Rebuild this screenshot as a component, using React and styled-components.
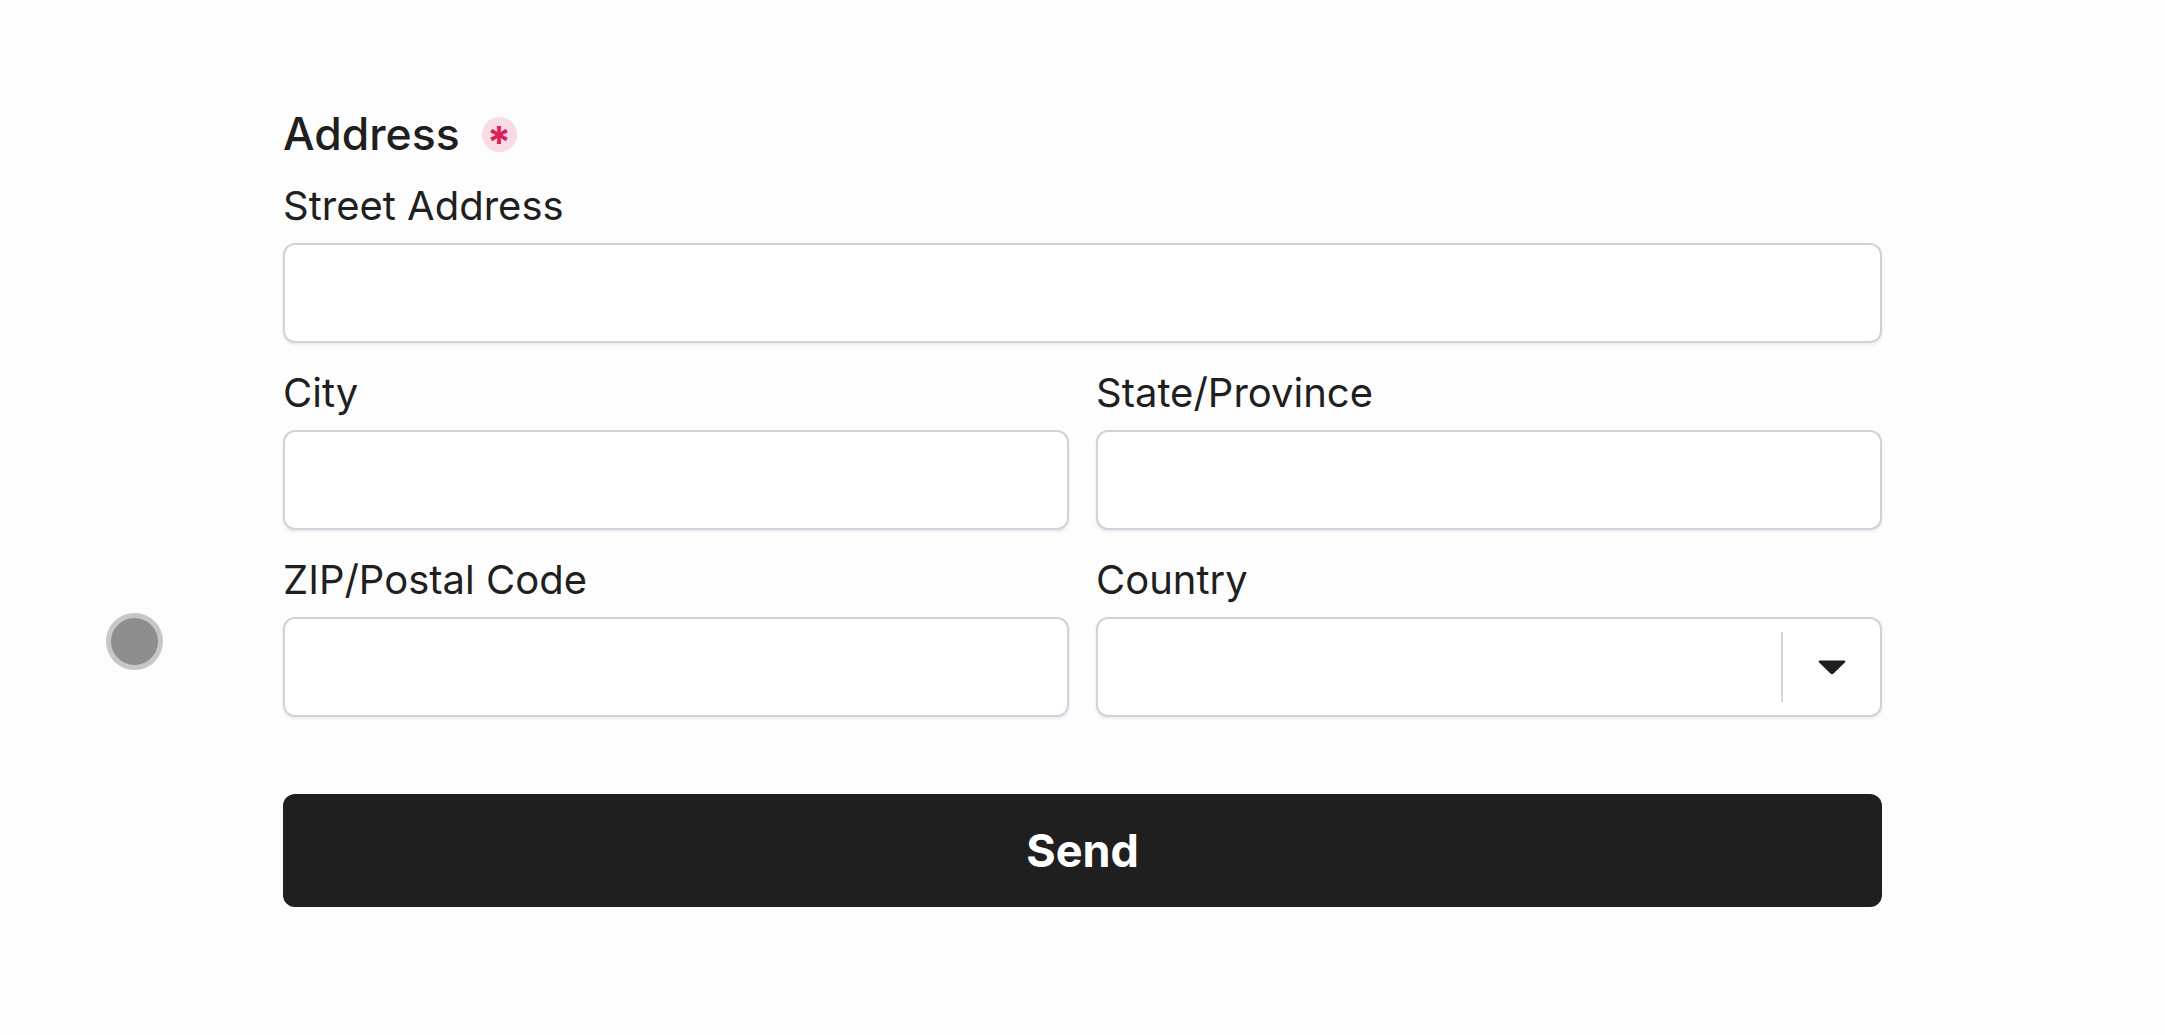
import styled, { createGlobalStyle } from 'styled-components';

const GlobalStyle = createGlobalStyle`
    html, body {
        margin: 0;
        padding: 0;
        background: #fdfdfd;
    }
    body {
        font-family: Inter, "Noto Sans", "Liberation Sans", sans-serif;
        color: #1f1f1f;
    }
`

const App = () => {
    return (
        <>
        <GlobalStyle />
        <Page>
            <TouchDot />
            <Form onSubmit={(e) => e.preventDefault()}>
                <Heading>
                    Address
                    <Required>*</Required>
                </Heading>
                <Field>
                    <Label htmlFor="street">Street Address</Label>
                    <Input id="street" type="text" />
                </Field>
                <Row>
                    <Field>
                        <Label htmlFor="city">City</Label>
                        <Input id="city" type="text" />
                    </Field>
                    <Field>
                        <Label htmlFor="state">State/Province</Label>
                        <Input id="state" type="text" />
                    </Field>
                </Row>
                <Row>
                    <Field>
                        <Label htmlFor="zip">ZIP/Postal Code</Label>
                        <Input id="zip" type="text" />
                    </Field>
                    <Field>
                        <Label htmlFor="country">Country</Label>
                        <Select id="country">
                            <SelectValue />
                            <Indicator>
                                <svg width="30" height="16" viewBox="0 0 30 16">
                                    <path d="M3 1.5 H27 Q29.5 1.5 27.8 3.4 L16.6 14.6 Q15 16 13.4 14.6 L2.2 3.4 Q0.5 1.5 3 1.5 Z" fill="#1f1f1f" />
                                </svg>
                            </Indicator>
                        </Select>
                    </Field>
                </Row>
                <SendButton type="submit">Send</SendButton>
            </Form>
        </Page>
        </>
    );
};

export default App;

const Page = styled.div`
    position: relative;
    min-height: 1035px;
    padding-top: 109px;
    box-sizing: border-box;
`

const TouchDot = styled.div`
    position: absolute;
    left: 106px;
    top: 613px;
    width: 57px;
    height: 57px;
    box-sizing: border-box;
    border-radius: 50%;
    background: #8e8e8e;
    border: 5px solid #c7c7c7;
`

const Form = styled.form`
    width: 1599px;
    margin: 0 auto;
    display: flex;
    flex-direction: column;
`

const Heading = styled.h2`
    margin: 0 0 23px;
    display: flex;
    align-items: center;
    gap: 22px;
    font-size: 44.5px;
    font-weight: 500;
    line-height: 51px;
`

const Required = styled.span`
    display: inline-flex;
    align-items: center;
    justify-content: center;
    width: 35px;
    height: 35px;
    border-radius: 50%;
    background: #f9dbe4;
    color: #dc1f5a;
    font-size: 44px;
    font-weight: 700;
    line-height: 35px;
    padding-top: 15px;
    box-sizing: border-box;
`

const Row = styled.div`
    display: grid;
    grid-template-columns: 1fr 1fr;
    gap: 27px;
    margin-top: 27px;
`

const Field = styled.div`
    display: flex;
    flex-direction: column;
    gap: 14px;
`

const Label = styled.label`
    font-size: 40px;
    line-height: 46px;
    font-weight: 400;
`

const Input = styled.input`
    height: 100px;
    box-sizing: border-box;
    border: 2px solid #cdd3dd;
    border-radius: 12px;
    background: #fff;
    box-shadow: 0 2px 3px rgba(20, 30, 50, 0.08);
    font: inherit;
    font-size: 36px;
    padding: 0 24px;
    outline: none;
`

const Select = styled.div`
    height: 100px;
    box-sizing: border-box;
    border: 2px solid #cdd3dd;
    border-radius: 12px;
    background: #fff;
    box-shadow: 0 2px 3px rgba(20, 30, 50, 0.08);
    display: flex;
    align-items: stretch;
`

const SelectValue = styled.div`
    flex: 1;
`

const Indicator = styled.div`
    width: 97px;
    margin: 13px 0;
    border-left: 2px solid #d3d6dc;
    display: flex;
    align-items: center;
    justify-content: center;
`

const SendButton = styled.button`
    margin-top: 77px;
    height: 113px;
    border: none;
    border-radius: 12px;
    background: #1f1f1f;
    color: #fff;
    font-family: inherit;
    font-size: 45px;
    font-weight: 700;
    cursor: pointer;
`
